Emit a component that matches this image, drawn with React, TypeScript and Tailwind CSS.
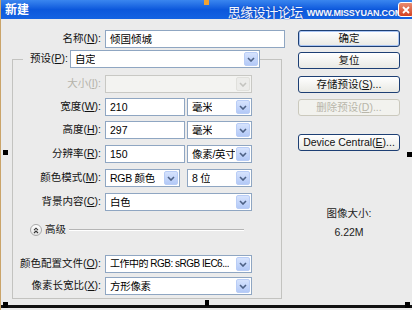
import React from "react";

const font = { fontFamily: '"Liberation Sans", "Noto Sans CJK SC", sans-serif' };

function Chevron({ color = "#4d6185" }: { color?: string }) {
  return (
    <svg width="8" height="5" viewBox="0 0 8 5" fill="none">
      <path d="M1 1l3 3 3-3" stroke={color} strokeWidth="1.6" />
    </svg>
  );
}

function Label({ text, k, rest = "):", width = "w-[90px]", disabled = false }: { text: string; k: string; rest?: string; width?: string; disabled?: boolean }) {
  return (
    <span className={`${width} shrink-0 text-right pr-[2px] whitespace-nowrap ${disabled ? "text-[#b5b3aa]" : "text-[#111]"}`}>
      {text}(<span className="underline">{k}</span>{rest}
    </span>
  );
}

function Field({ value, w }: { value: string; w: string }) {
  return (
    <div className={`${w} h-[18px] border border-[#8fa6c2] bg-white pl-[4px] flex items-center leading-none`}>{value}</div>
  );
}

function Select({ value, w, disabled = false, tight = false }: { value: string; w: string; disabled?: boolean; tight?: boolean }) {
  return (
    <div
      className={`${w} h-[18px] border flex items-center justify-between pl-[4px] pr-[1px] leading-none ${
        disabled ? "border-[#c8c8c4] bg-[#f3f3f1]" : "border-[#8fa6c2] bg-white"
      }`}
    >
      <span className={`overflow-hidden whitespace-nowrap ${tight ? "text-[10px] tracking-[-0.5px]" : "tracking-[-0.3px]"}`}>{value}</span>
      <span
        className={`ml-[1px] w-[14px] h-[14px] shrink-0 rounded-[2px] border flex items-center justify-center ${
          disabled ? "border-[#e0e0dc] bg-[#ececea]" : "border-[#b9cdf6] bg-gradient-to-b from-[#d6e3fd] to-[#b3c9f7]"
        }`}
      >
        <Chevron color={disabled ? "#c4c4c0" : "#4d6185"} />
      </span>
    </div>
  );
}

function Button({ children, disabled = false, primary = false, mt }: { children: React.ReactNode; disabled?: boolean; primary?: boolean; mt: string }) {
  return (
    <div
      className={`${mt} w-[102px] h-[17px] rounded-[3px] border flex items-center justify-center leading-none whitespace-nowrap ${
        disabled
          ? "border-[#cbc9bd] bg-[#f2f2ee] text-[#b8b6aa]"
          : "border-[#1d3f74] bg-gradient-to-b from-white to-[#e9e9e4] text-[#111]"
      } ${primary ? "shadow-[inset_0_0_0_1px_#a9c5f3]" : ""}`}
    >
      {children}
    </div>
  );
}

export default function App() {
  return (
    <div style={font} className="relative w-[412px] h-[310px] overflow-hidden bg-[#ebebeb] text-[10.5px] border-l border-[#caa46a]">
      {/* title bar */}
      <div className="h-[19px] flex items-center bg-gradient-to-b from-[#3a86ef] via-[#0c58dc] to-[#1463e2] pl-[4px]">
        <span className="text-white font-bold text-[12px] leading-none">新建</span>
        <span
          className="ml-auto text-[#f4f8ff] text-[13px] leading-none mt-[5px] tracking-[-0.5px]"
          style={{ textShadow: "0 0 1px #1b49b8, 0 0 1px #1b49b8" }}
        >
          思缘设计论坛
        </span>
        <span
          className="ml-[4px] mr-[-4px] text-[#f4f8ff] text-[9px] font-bold leading-none mt-[7px] tracking-[-0.2px]"
          style={{ textShadow: "0 0 1px #1b49b8" }}
        >
          WWW.MISSYUAN.COM
        </span>
        <span className="mr-[-2px] w-[16px] h-[15px] rounded-[3px] border border-white bg-gradient-to-b from-[#e98a6f] to-[#d3401f] flex items-center justify-center">
          <svg width="8" height="8" viewBox="0 0 8 8">
            <path d="M1 1l6 6M7 1L1 7" stroke="#fff" strokeWidth="1.8" />
          </svg>
        </span>
      </div>

      <div className="flex">
        {/* left column */}
        <div className="w-[289px] flex flex-col">
          <div className="mt-[11px] flex items-center h-[18px]">
            <Label text="名称" k="N" width="w-[102px]" />
            <div className="ml-[2px]">
              <Field value="倾国倾城" w="w-[180px]" />
            </div>
          </div>

          <div className="mt-[11px] ml-[11px] w-[270px] h-[240px] border border-[#c3c3c0] flex flex-col">
            <div className="-mt-[10px] flex items-center h-[18px] pl-[10px]">
              <span className="bg-[#ebebeb] pl-[2px] pr-[2px] w-[47px] text-right text-[#111] whitespace-nowrap">
                预设(<span className="underline">P</span>):
              </span>
              <Select value="自定" w="w-[190px]" />
            </div>

            <div className="mt-[7px] flex items-center gap-[2px]">
              <Label text="大小" k="I" disabled />
              <Select value="" w="w-[147px]" disabled />
            </div>
            <div className="mt-[5px] flex items-center gap-[2px]">
              <Label text="宽度" k="W" />
              <Field value="210" w="w-[80px]" />
              <Select value="毫米" w="w-[65px]" />
            </div>
            <div className="mt-[5px] flex items-center gap-[2px]">
              <Label text="高度" k="H" />
              <Field value="297" w="w-[80px]" />
              <Select value="毫米" w="w-[65px]" />
            </div>
            <div className="mt-[6px] flex items-center gap-[2px]">
              <Label text="分辨率" k="R" />
              <Field value="150" w="w-[80px]" />
              <Select value="像素/英寸" w="w-[65px]" />
            </div>
            <div className="mt-[6px] flex items-center gap-[2px]">
              <Label text="颜色模式" k="M" />
              <Select value="RGB 颜色" w="w-[75px]" />
              <div className="ml-[5px]">
                <Select value="8 位" w="w-[65px]" />
              </div>
            </div>
            <div className="mt-[6px] flex items-center gap-[2px]">
              <Label text="背景内容" k="C" />
              <Select value="白色" w="w-[147px]" />
            </div>

            <div className="mt-[13px] h-[12px] flex items-center pl-[17px]">
              <span className="w-[12px] h-[12px] rounded-full border border-[#a8a8a8] bg-gradient-to-b from-white to-[#e4e4e4] flex items-center justify-center">
                <svg width="6" height="7" viewBox="0 0 6 7" fill="none">
                  <path d="M1 3.2l2-2 2 2M1 6l2-2 2 2" stroke="#333" strokeWidth="1.1" />
                </svg>
              </span>
              <span className="ml-[3px] text-[#222]">高级</span>
              <span className="ml-[3px] w-[175px] h-[2px] border-t border-[#b5b5b5] border-b border-b-white" />
            </div>

            <div className="mt-[19px] flex items-center gap-[2px]">
              <Label text="颜色配置文件" k="O" />
              <Select value="工作中的 RGB: sRGB IEC6..." w="w-[147px]" tight />
            </div>
            <div className="mt-[4px] flex items-center gap-[2px]">
              <Label text="像素长宽比" k="X" />
              <Select value="方形像素" w="w-[147px]" />
            </div>
          </div>
        </div>

        {/* right column */}
        <div className="ml-[8px] w-[102px] flex flex-col">
          <Button mt="mt-[11px]" primary>确定</Button>
          <Button mt="mt-[5px]">复位</Button>
          <Button mt="mt-[7px]">
            存储预设(<span className="underline">S</span>)...
          </Button>
          <Button mt="mt-[6px]" disabled>
            删除预设(<span className="underline">D</span>)...
          </Button>
          <Button mt="mt-[18px]">
            Device Central(<span className="underline">E</span>)...
          </Button>
          <div className="mt-[55px] text-center text-[#222] leading-[14px]">图像大小:</div>
          <div className="mt-[5px] text-center text-[#222] leading-[14px]">6.22M</div>
        </div>
      </div>

      {/* bottom edge */}
      <div className="absolute left-0 right-0 top-[305px] h-[3px] bg-[#111]" />
      {/* selection handles */}
      <span className="absolute left-[203px] top-0 w-[5px] h-[5px] bg-[#f0a233]" />
      <span className="absolute left-[2px] top-[150px] w-[5px] h-[5px] bg-black" />
      <span className="absolute left-[406px] top-[152px] w-[5px] h-[5px] bg-black" />
      <span className="absolute left-[2px] top-[302px] w-[5px] h-[6px] bg-black" />
      <span className="absolute left-[204px] top-[300px] w-[4px] h-[6px] bg-black" />
      <span className="absolute left-[404px] top-[302px] w-[5px] h-[6px] bg-black" />
    </div>
  );
}
